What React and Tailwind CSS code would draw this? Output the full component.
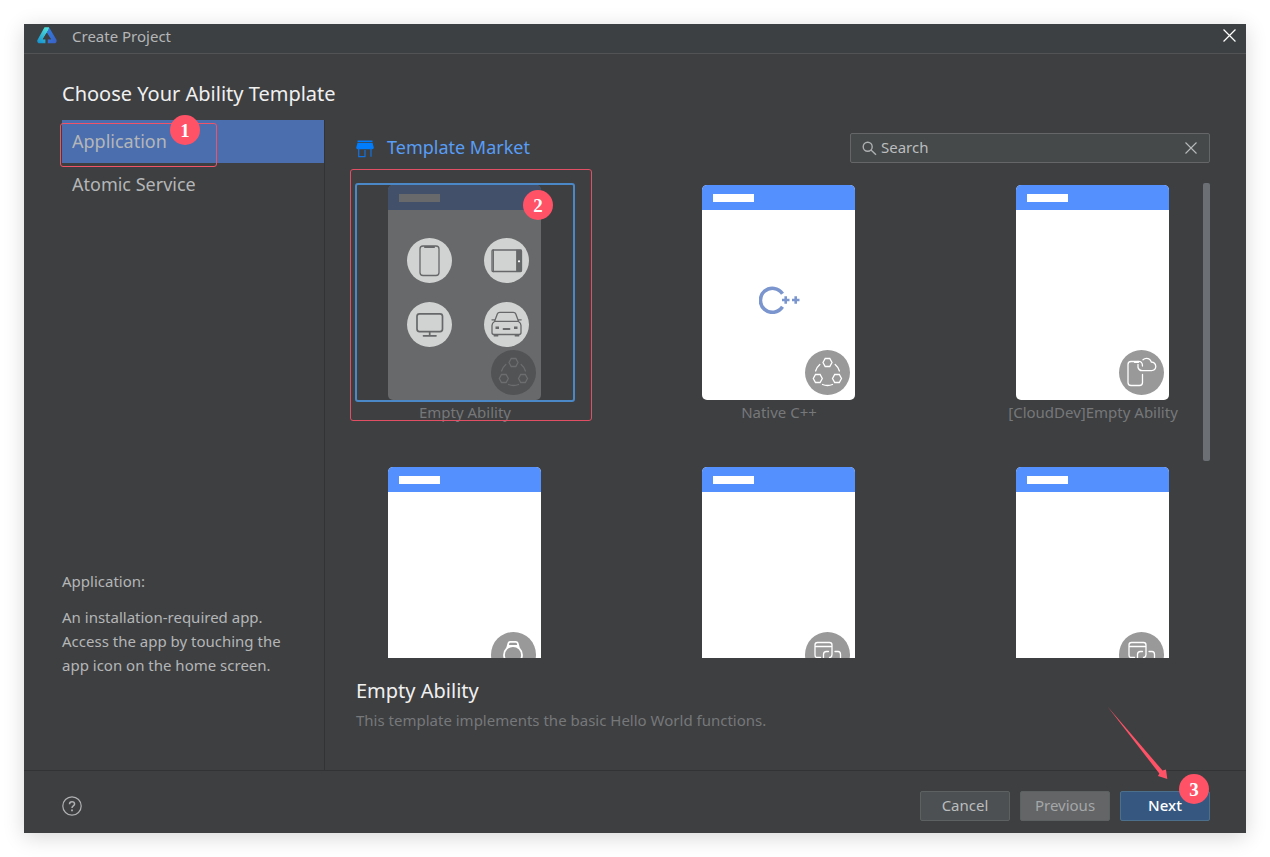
import React from "react";

function Logo() {
  return (
    <svg width="20" height="17" viewBox="0 0 20 17" aria-hidden="true">
      <defs>
        <linearGradient id="lg-a" x1="0.7" y1="0" x2="0.2" y2="1">
          <stop offset="0" stopColor="#4fe0d8" />
          <stop offset="1" stopColor="#1793d0" />
        </linearGradient>
        <linearGradient id="lg-b" x1="0" y1="0" x2="1" y2="1">
          <stop offset="0" stopColor="#2f7fe0" />
          <stop offset="1" stopColor="#3b5fc4" />
        </linearGradient>
      </defs>
      <path d="M7.500 .2h4.500L12 2 5.800 12.200h2.600v4H1.500Q-.2 15 .3 13.200Z" fill="url(#lg-a)" />
      <path d="M12 .2 19.600 13Q20 15.500 18.300 16.200H10.800V12.200h3.200L9.800 5.500 11.500 2.500Z" fill="url(#lg-b)" />
      <path d="M9.500 6 14 12.200H5.800Z" fill="#3c4042" />
    </svg>
  );
}

function CloseIcon({ size }) {
  return (
    <svg width={size} height={size} viewBox="0 0 12 12" fill="none" stroke="currentColor" strokeWidth="1.1" aria-hidden="true">
      <path d="M.5.5l11 11M11.500.5l-11 11" />
    </svg>
  );
}

function StoreIcon() {
  return (
    <svg width="18" height="18" viewBox="0 0 18 18" aria-hidden="true">
      <path d="M1.500 .6h15v1.300h-15zM1.500 2.700h15l1.300 5q-.3 1.500-1.800 1.500H2Q.5 9.200 .2 7.700Z" fill="#007dff" />
      <path d="M2.700 8v8.700h6.300V10M15 8v8.700" fill="none" stroke="#1272e0" strokeWidth="1.200" />
    </svg>
  );
}

function SearchIcon() {
  return (
    <svg width="15" height="15" viewBox="0 0 15 15" fill="none" stroke="#adafb0" strokeWidth="1.400" aria-hidden="true">
      <circle cx="5.700" cy="5.700" r="4.500" />
      <path d="M9 9l5 4.700" />
    </svg>
  );
}

const HEX = "M-4.500 0l2.200-4h4.600l2.200 4-2.200 4h-4.600z";

const badgeGlyphs = {
  network: (
    <g>
      <path d={HEX} transform="translate(22.500 12.500)" />
      <path d={HEX} transform="translate(12.800 28.500)" />
      <path d={HEX} transform="translate(32 28.500)" />
      <path d="M14.800 14.500q-3 2.500-4.200 6.500M30.200 14.500q3 2.500 4.200 6.500M17.500 34.500q5 2 10 0" />
    </g>
  ),
  cloud: (
    <g>
      <path d="M19 11.500h-7q-3 0-3 3v18q0 3 3 3h8.500q3 0 3-3V24.500M15.500 12.300h4" />
      <path d="M19 14.500v3q1 3.200 4 3.200h9.500q4-.3 4.300-4.200-.3-4.200-4.500-4.500-1.300-3.700-4.800-3.700-2 0-3.500 1.500M19 11.500q4.500-.5 4.500 4.500" />
    </g>
  ),
  watch: (
    <g strokeWidth="1.800">
      <circle cx="22" cy="23" r="9" />
      <path d="M16.300 15.500l1.200-4.500q.4-1.200 1.800-1.200h5.500q1.400 0 1.800 1.200l1.200 4.500M18 14h8" />
    </g>
  ),
  windows: (
    <g>
      <path d="M15.500 25.500h-3.500q-2 0-2-2.500V13q0-2.500 2.500-2.500h12q2.500 0 2.500 2.500v9.500q0 3-2.500 3M10 14.500h17" />
      <path d="M18.500 27v-4.500q0-3 3-3h2M30 19.500h3q2.500 0 2.500 3v8" />
    </g>
  ),
};

function CornerBadge({ kind, dimmed }) {
  return (
    <svg
      className="absolute right-[5px] bottom-[5px]"
      width="45"
      height="45"
      viewBox="0 0 45 45"
      fill="none"
      stroke={dimmed ? "#6b6d6e" : "#ffffff"}
      strokeWidth="1.300"
      strokeLinecap="round"
      aria-hidden="true"
    >
      <circle cx="22.500" cy="22.500" r="22.500" fill={dimmed ? "#525354" : "#999999"} stroke="none" />
      {badgeGlyphs[kind]}
    </svg>
  );
}

const deviceGlyphs = {
  phone: (
    <g>
      <rect x="13" y="8" width="19" height="29.500" rx="3" />
      <path d="M18 9h9" strokeWidth="2.200" />
    </g>
  ),
  tablet: (
    <g>
      <rect x="8" y="12" width="29.500" height="21.500" rx="1" />
      <path d="M9.300 12v21.500M32.800 12.500h4.200v20.500h-4.200z" fill="#666869" />
      <circle cx="35" cy="23.300" r="1.100" fill="#fff" stroke="none" />
    </g>
  ),
  desktop: (
    <g strokeWidth="1.700">
      <rect x="10" y="11.800" width="25.500" height="17.800" rx="2.500" />
      <path d="M22.700 30v3.500M16.500 33.800H29" />
    </g>
  ),
  car: (
    <g>
      <path d="M10.500 19.500L13.300 12q.6-1.700 2.500-1.700h13.500q1.900 0 2.500 1.700l2.800 7.500M10.500 19.300h24M10.500 19.500Q8 21 8 23.500v7q0 2 2 2h25q2 0 2-2v-7q0-2.500-2.500-4M8 17.800h2.500M34.700 17.800h2.500" />
      <path d="M11.500 25.700h3.500M30 25.700h3.500" strokeWidth="2.600" strokeLinecap="butt" />
      <path d="M19.500 27h6M10.500 33.700h3M31.500 33.700h3" strokeWidth="1.800" />
    </g>
  ),
};

function Device({ kind }) {
  return (
    <svg width="45" height="45" viewBox="0 0 45 45" fill="none" stroke="#666869" strokeWidth="1.300" strokeLinecap="round" aria-hidden="true">
      <circle cx="22.500" cy="22.500" r="22.500" fill="#d1d3d2" stroke="none" />
      {deviceGlyphs[kind]}
    </svg>
  );
}

function CppMark() {
  return (
    <svg width="42" height="28" viewBox="0 0 42 28" fill="none" stroke="#7b96cf" aria-hidden="true">
      <path d="M23.500 7.800A12 12 0 1 0 23.500 20.800" strokeWidth="3.600" />
      <path d="M23 14h7.500M26.700 10.200v7.600M33 14h7.500M36.700 10.200v7.600" strokeWidth="2.600" />
    </svg>
  );
}

function TemplateCard({ label, badge, selected, cpp }) {
  return (
    <button type="button" aria-label={label || badge} aria-pressed={!!selected} className="flex w-[220px] flex-col items-center">
      <span
        className={
          "flex w-full rounded-[3px] border-2 pl-[31px] " + (selected ? "border-[#4a88c7]" : "border-transparent")
        }
      >
        <span
          className={
            "relative flex h-[215px] w-[153px] flex-col overflow-hidden rounded-[5px] " +
            (selected ? "bg-[#67696a]" : "bg-white")
          }
        >
          <span className={"flex h-[25px] shrink-0 items-center px-[11px] " + (selected ? "bg-[#435069]" : "bg-[#5491ff]")}>
            <span className={"h-2 w-[41px] " + (selected ? "bg-[#67696a]" : "bg-white")} />
          </span>
          {selected && (
            <span className="grid grid-cols-[45px_45px] gap-x-8 gap-y-[19px] pt-7 pl-[19px]">
              <Device kind="phone" />
              <Device kind="tablet" />
              <Device kind="desktop" />
              <Device kind="car" />
            </span>
          )}
          {cpp && (
            <span className="flex flex-1 items-center justify-center pb-[10px] pl-[3px]">
              <CppMark />
            </span>
          )}
          <CornerBadge kind={badge} dimmed={selected} />
        </span>
      </span>
      <span className="text-[15px] leading-5 whitespace-nowrap text-[#76787a]">{label}</span>
    </button>
  );
}

function Step({ n, className }) {
  return (
    <span
      className={
        "absolute z-10 flex size-[30px] items-center justify-center rounded-full bg-[#ff5267] font-['Liberation_Serif',serif] text-[19px] leading-none font-bold text-white " +
        className
      }
    >
      {n}
    </span>
  );
}

const templates = [
  { label: "Empty Ability", badge: "network", selected: true },
  { label: "Native C++", badge: "network", cpp: true },
  { label: "[CloudDev]Empty Ability", badge: "cloud" },
  { label: "", badge: "watch" },
  { label: "", badge: "windows" },
  { label: "", badge: "windows" },
];

export default function App() {
  return (
    <div className="flex h-screen min-h-[600px] bg-white px-6 pt-6 pb-6 font-['Noto_Sans',sans-serif] text-[15px] text-[#b4b6b7]">
      <div className="flex min-w-0 flex-1 flex-col bg-[#3e3f41] shadow-[0_4px_20px_rgba(0,0,0,0.16)]">
        <header className="flex h-[30px] shrink-0 items-center border-b border-[#515354] bg-[#3c4042] pr-[10px] pl-[13px]">
          <span className="pb-[6px]">
            <Logo />
          </span>
          <span className="ml-[15px] flex-1 pb-[6px] text-[15px] leading-[22px]">Create Project</span>
          <button type="button" aria-label="Close" className="pb-[7px] text-white">
            <CloseIcon size={13} />
          </button>
        </header>

        <h1 className="flex h-[66px] shrink-0 items-center px-[38px] pt-[14px] text-[20px] leading-7 text-[#f0f0f0]">
          Choose Your Ability Template
        </h1>

        <div className="flex min-h-0 flex-1">
          <aside className="flex w-[301px] shrink-0 flex-col justify-between border-r border-[#323334] pb-[93px] pl-[38px]">
            <nav className="relative flex flex-col text-[18px]">
              <button type="button" className="h-[43px] bg-[#4b6eaf] pl-[10px] text-left">
                Application
              </button>
              <button type="button" className="h-[43px] pl-[10px] text-left">
                Atomic Service
              </button>
              <span className="absolute top-[3px] -left-[2px] h-11 w-[157px] rounded-[3px] border border-[#f05268]" />
              <Step n="1" className="-top-[5px] left-[108px]" />
            </nav>
            <div className="pr-5 leading-6">
              <p>Application:</p>
              <p className="mt-3">
                An installation-required app.
                <br />
                Access the app by touching the
                <br />
                app icon on the home screen.
              </p>
            </div>
          </aside>

          <main className="flex min-w-0 flex-1 flex-col pt-[13px] pr-9 pb-[38px] pl-[30px]">
            <div className="flex items-center justify-between">
              <a href="#market" className="flex items-center gap-[13px] pb-[2px] pl-px text-[18px] leading-7 text-[#589df6]">
                <span className="pt-1">
                  <StoreIcon />
                </span>
                Template Market
              </a>
              <div className="flex h-[30px] w-[360px] items-center rounded-[2px] border border-[#646667] bg-[#45494a] pr-3 pl-[11px]">
                <SearchIcon />
                <input
                  type="text"
                  aria-label="Search templates"
                  placeholder="Search"
                  className="ml-1 min-w-0 flex-1 bg-transparent pb-[2px] text-[15px] text-[#bbbdbe] outline-none placeholder:text-[#bbbdbe]"
                />
                <button type="button" aria-label="Clear search" className="text-[#b8babb]">
                  <CloseIcon size={12} />
                </button>
              </div>
            </div>

            <div className="relative mt-5 flex min-h-0 flex-1">
              <div className="grid min-w-0 flex-1 grid-cols-[repeat(3,220px)] content-start justify-between gap-y-[43px] overflow-y-auto [scrollbar-width:none]">
                {templates.map((t, i) => (
                  <TemplateCard key={i} {...t} />
                ))}
              </div>
              <div className="h-[278px] w-[7px] rounded-[2px] bg-[#6c6f74]" />
              <span className="pointer-events-none absolute -top-[14px] -left-[5px] h-[252px] w-[242px] rounded-[3px] border border-[#e04f63]" />
              <Step n="2" className="top-[7px] left-[168px]" />
            </div>

            <h2 className="mt-[19px] pl-px text-[20px] leading-7 text-[#f0f0f0]">Empty Ability</h2>
            <p className="mt-[3px] pl-px leading-6 text-[#76787a]">This template implements the basic Hello World functions.</p>
          </main>
        </div>

        <footer className="flex shrink-0 items-center gap-[10px] border-t border-[#323334] pt-5 pr-9 pb-3 pl-[38px]">
          <button type="button" aria-label="Help" className="mr-auto">
            <svg width="20" height="20" viewBox="0 0 20 20" fill="none" stroke="#afb1b3" aria-hidden="true">
              <circle cx="10" cy="10" r="9.200" strokeWidth="1.200" />
              <path d="M7.500 8.200Q7.500 5.800 10 5.800T12.600 8Q12.600 9 11.300 9.900T10 12" strokeWidth="1.500" />
              <path d="M10 13.500v1.800" strokeWidth="1.800" />
            </svg>
          </button>
          <button type="button" className="h-[30px] w-[90px] rounded-[2px] border border-[#5e6162] bg-[#4c5052] pb-[2px] text-[#bbbdbe]">
            Cancel
          </button>
          <button type="button" disabled className="h-[30px] w-[90px] rounded-[2px] border border-[#5e6162] bg-[#636567] pb-[2px] text-[#a5a7a8]">
            Previous
          </button>
          <div className="relative">
            <button type="button" className="h-[30px] w-[90px] rounded-[2px] border border-[#4c708c] bg-[#365880] pb-[2px] font-medium text-white">
              Next
            </button>
            <svg className="pointer-events-none absolute -top-[85px] -left-[13px]" width="62" height="74" viewBox="0 0 62 74" fill="#ff5267" aria-hidden="true">
              <path d="M.5.5L55.500 64.500 59 63.500 60.300 73 51 70 52.300 67.500Z" />
            </svg>
            <Step n="3" className="-top-[17px] left-[59px]" />
          </div>
        </footer>
      </div>
    </div>
  );
}
